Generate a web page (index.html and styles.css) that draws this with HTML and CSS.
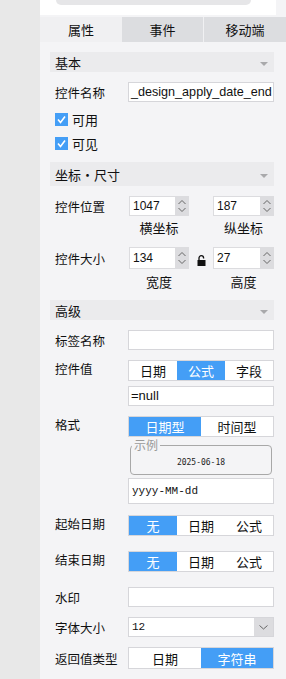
FILE: index.html
```html
<!DOCTYPE html>
<html lang="zh-CN">
<head>
  <meta charset="UTF-8" />
  <title>属性面板</title>
  <link rel="stylesheet" href="styles.css">
</head>
<body>
  <div class="app">
    <div class="rail"></div>

    <div class="panel">
      <div class="top"><div class="top-box"></div></div>

      <div class="tabs">
        <div class="tab active">属性</div>
        <div class="tab">事件</div>
        <div class="tab tab-last">移动端</div>
      </div>

      <div class="content">
        <!-- 基本 -->
        <div class="group-head">基本<span class="caret"></span></div>

        <div class="row row-name">
          <div class="lbl">控件名称</div>
          <div class="field text-sans name">_design_apply_date_end</div>
        </div>

        <div class="check check-1"><span class="box"><svg width="13" height="13" viewBox="0 0 13 13"><polyline points="3,6.5 5.5,9.5 10,3.5" fill="none" stroke="#fff" stroke-width="1.6"/></svg></span>可用</div>
        <div class="check check-2"><span class="box"><svg width="13" height="13" viewBox="0 0 13 13"><polyline points="3,6.5 5.5,9.5 10,3.5" fill="none" stroke="#fff" stroke-width="1.6"/></svg></span>可见</div>

        <!-- 坐标・尺寸 -->
        <div class="group-head head-tall">坐标・尺寸<span class="caret"></span></div>

        <div class="row row-pos">
          <div class="lbl">控件位置</div>
          <div class="num num-1">
            <div class="num-val">1047</div>
            <div class="spin"><svg width="14" height="20" viewBox="0 0 14 20"><polyline points="3.5,8 7,4.5 10.5,8" fill="none" stroke="#666" stroke-width="1"/><polyline points="3.5,12 7,15.5 10.5,12" fill="none" stroke="#666" stroke-width="1"/></svg></div>
          </div>
          <div class="num num-2">
            <div class="num-val">187</div>
            <div class="spin"><svg width="14" height="20" viewBox="0 0 14 20"><polyline points="3.5,8 7,4.5 10.5,8" fill="none" stroke="#666" stroke-width="1"/><polyline points="3.5,12 7,15.5 10.5,12" fill="none" stroke="#666" stroke-width="1"/></svg></div>
          </div>
        </div>
        <div class="sub sub-1"><span class="sub-a">横坐标</span><span class="sub-b">纵坐标</span></div>

        <div class="row row-size">
          <div class="lbl">控件大小</div>
          <div class="num num-1">
            <div class="num-val">134</div>
            <div class="spin"><svg width="14" height="22" viewBox="0 0 14 22"><polyline points="3.5,9 7,5.5 10.5,9" fill="none" stroke="#666" stroke-width="1"/><polyline points="3.5,13 7,16.5 10.5,13" fill="none" stroke="#666" stroke-width="1"/></svg></div>
          </div>
          <div class="lock"><svg width="9" height="11" viewBox="0 0 9 11"><path d="M2 5.5 V3 A2.3 2.3 0 0 1 6.6 3 V3.6" fill="none" stroke="#111" stroke-width="1.3"/><rect x="0.5" y="5" width="8" height="6" fill="#111"/></svg></div>
          <div class="num num-2">
            <div class="num-val">27</div>
            <div class="spin"><svg width="14" height="22" viewBox="0 0 14 22"><polyline points="3.5,9 7,5.5 10.5,9" fill="none" stroke="#666" stroke-width="1"/><polyline points="3.5,13 7,16.5 10.5,13" fill="none" stroke="#666" stroke-width="1"/></svg></div>
          </div>
        </div>
        <div class="sub sub-2"><span class="sub-a">宽度</span><span class="sub-b">高度</span></div>

        <!-- 高级 -->
        <div class="group-head head-3">高级<span class="caret"></span></div>

        <div class="row row-tag">
          <div class="lbl">标签名称</div>
          <div class="field"></div>
        </div>

        <div class="row row-value">
          <div class="lbl lbl-top">控件值</div>
          <div class="stack">
            <div class="seg">
              <div class="seg-item">日期</div>
              <div class="seg-item on">公式</div>
              <div class="seg-item">字段</div>
            </div>
            <div class="field text-sans null">=null</div>
          </div>
        </div>

        <div class="row row-format">
          <div class="lbl lbl-top">格式</div>
          <div class="stack">
            <div class="seg">
              <div class="seg-item on">日期型</div>
              <div class="seg-item">时间型</div>
            </div>
            <fieldset class="sample">
              <legend>示例</legend>
              <div class="sample-date">2025-06-18</div>
            </fieldset>
            <div class="field pattern">yyyy-MM-dd</div>
          </div>
        </div>

        <div class="row row-start">
          <div class="lbl lbl-top">起始日期</div>
          <div class="seg">
            <div class="seg-item on">无</div>
            <div class="seg-item">日期</div>
            <div class="seg-item">公式</div>
          </div>
        </div>

        <div class="row row-end">
          <div class="lbl lbl-top">结束日期</div>
          <div class="seg">
            <div class="seg-item on">无</div>
            <div class="seg-item">日期</div>
            <div class="seg-item">公式</div>
          </div>
        </div>

        <div class="row row-mark">
          <div class="lbl">水印</div>
          <div class="field"></div>
        </div>

        <div class="row row-font">
          <div class="lbl">字体大小</div>
          <div class="select">
            <div class="select-val">12</div>
            <div class="select-btn"><svg width="19" height="18" viewBox="0 0 19 18"><polyline points="5.5,7.5 9.5,11 13.5,7.5" fill="none" stroke="#666" stroke-width="1"/></svg></div>
          </div>
        </div>

        <div class="row row-return">
          <div class="lbl">返回值类型</div>
          <div class="seg seg-tall">
            <div class="seg-item">日期</div>
            <div class="seg-item on">字符串</div>
          </div>
        </div>
      </div>
    </div>
  </div>
</body>
</html>
```

FILE: styles.css
```css
:root {
  --rail: #e8e8e8;
  --panel: #f4f4f6;
  --head: #ebebed;
  --tab: #dcdde0;
  --tab-on: #f0f0f2;
  --line: #d6d6da;
  --blue: #449ef6;
  --text: #1e1e1e;
}

body {
  margin: 0;
  font-family: "Noto Sans CJK SC", "Liberation Sans", sans-serif;
  font-size: 12px;
  color: var(--text);
  background: var(--panel);
}

.app {
  display: flex;
  width: 286px;
  height: 679px;
  overflow: hidden;
}

.rail {
  width: 40px;
  flex: none;
  background: var(--rail);
}

.panel {
  width: 246px;
  background: var(--panel);
}

/* top strip */
.top {
  width: 236px;
  height: 15px;
  background: #fff;
}

.top-box {
  margin-left: 16px;
  width: 195px;
  height: 5px;
  background: #e6e6e8;
  border-radius: 0 0 6px 6px;
}

/* tabs */
.tabs {
  display: flex;
  margin-top: 2px;
  height: 25px;
}

.tab {
  width: 81px;
  display: flex;
  align-items: center;
  justify-content: center;
  background: var(--tab);
  font-size: 13px;
  color: #111;
}

.tab.active {
  width: 82px;
  background: var(--tab-on);
}

.tab-last {
  width: 82px;
  border-left: 1px solid #f0f0f2;
}

/* content */
.content {
  padding: 0 12px 0 10px;
}

.group-head {
  margin-top: 10px;
  height: 20px;
  padding: 0 6px 0 5px;
  display: flex;
  align-items: center;
  justify-content: space-between;
  background: var(--head);
  font-size: 13px;
  color: #111;
}

.head-tall {
  margin-top: 12px;
  height: 24px;
}

.head-3 {
  margin-top: 8px;
}

.caret {
  width: 0;
  height: 0;
  margin-top: 4px;
  border-left: 4px solid transparent;
  border-right: 4px solid transparent;
  border-top: 4px solid #a9a9ab;
}

.row {
  display: flex;
  margin-top: 10px;
}

.lbl {
  width: 73px;
  flex: none;
  padding-left: 5px;
  display: flex;
  align-items: center;
  font-size: 12.5px;
  color: #111;
}

.lbl-top {
  align-items: flex-start;
  padding-top: 1px;
  line-height: 16px;
}

.field {
  flex: 1;
  height: 18px;
  background: #fff;
  border: 1px solid var(--line);
  line-height: 18px;
  padding-left: 2px;
  color: #111;
}

.text-sans {
  font-family: "Liberation Sans", sans-serif;
  font-size: 13px;
}

.name {
  font-size: 12.6px;
  white-space: nowrap;
  overflow: hidden;
}

/* checkboxes */
.check {
  display: flex;
  align-items: center;
  height: 14px;
  margin-top: 10px;
  padding-left: 5px;
  font-size: 13px;
  color: #111;
}

.box {
  width: 13px;
  height: 13px;
  margin-right: 4px;
  background: var(--blue);
  display: flex;
}

/* number spinners */
.num {
  display: flex;
  height: 20px;
  width: 60px;
  margin-left: 1px;
}

.num-2 {
  margin-left: 24px;
  width: 61px;
}

.num-val {
  flex: 1;
  background: #fff;
  border: 1px solid #dcdcdf;
  border-right: none;
  padding-left: 3px;
  line-height: 18px;
  font-family: "Liberation Sans", sans-serif;
  font-size: 12px;
  color: #111;
}

.spin {
  width: 14px;
  background: #dcdcdf;
  display: flex;
}

.row-size {
  margin-top: 9px;
}

.row-size .num {
  height: 22px;
}

.row-size .num-val {
  line-height: 20px;
}

.lock {
  margin-left: 8px;
  width: 9px;
  padding-top: 5px;
}

.row-size .num-2 {
  margin-left: 7px;
}

.sub {
  display: flex;
  padding-left: 79px;
  height: 20px;
  line-height: 20px;
  font-size: 13px;
  color: #111;
}

.sub-1 {
  margin-top: 2px;
}

.sub-2 {
  margin-top: 3px;
}

.sub-a {
  width: 60px;
  text-align: center;
}

.sub-b {
  width: 61px;
  margin-left: 24px;
  text-align: center;
}

/* segmented controls */
.stack {
  flex: 1;
  display: flex;
  flex-direction: column;
}

.seg {
  flex: 1;
  display: flex;
  height: 19px;
  border: 1px solid var(--line);
  background: #fff;
}

.stack .seg {
  flex: none;
}

.seg-item {
  flex: 1;
  display: flex;
  align-items: center;
  justify-content: center;
  font-size: 13px;
  color: #111;
}

.seg-item.on {
  background: var(--blue);
  color: #fff;
}

.seg-tall {
  height: 20px;
}

.null {
  margin-top: 5px;
}

.sample {
  margin: 2px 2px 0;
  padding: 0;
  border: 1px solid #a8a8a8;
  border-radius: 4px;
}

.sample legend {
  margin-left: 1px;
  padding: 0 2px;
  font-size: 12px;
  line-height: 12px;
  color: #9a9a9a;
}

.sample-date {
  height: 23px;
  display: flex;
  align-items: center;
  justify-content: center;
  font-family: "DejaVu Sans Mono", monospace;
  font-size: 8px;
  color: #222;
}

.pattern {
  margin-top: 3px;
  height: 24px;
  line-height: 24px;
  padding-left: 3px;
  font-family: "Liberation Mono", monospace;
  font-size: 11px;
  color: #111;
}

.row-start {
  margin-top: 11px;
}

.row-end {
  margin-top: 15px;
}

.row-mark {
  margin-top: 15px;
}

/* select */
.select {
  flex: 1;
  display: flex;
  height: 18px;
  border: 1px solid var(--line);
  background: #fff;
}

.select-val {
  flex: 1;
  padding-left: 3px;
  line-height: 18px;
  font-family: "Liberation Mono", monospace;
  font-size: 11px;
  color: #111;
}

.select-btn {
  width: 19px;
  background: #dcdcdf;
  display: flex;
}
```
